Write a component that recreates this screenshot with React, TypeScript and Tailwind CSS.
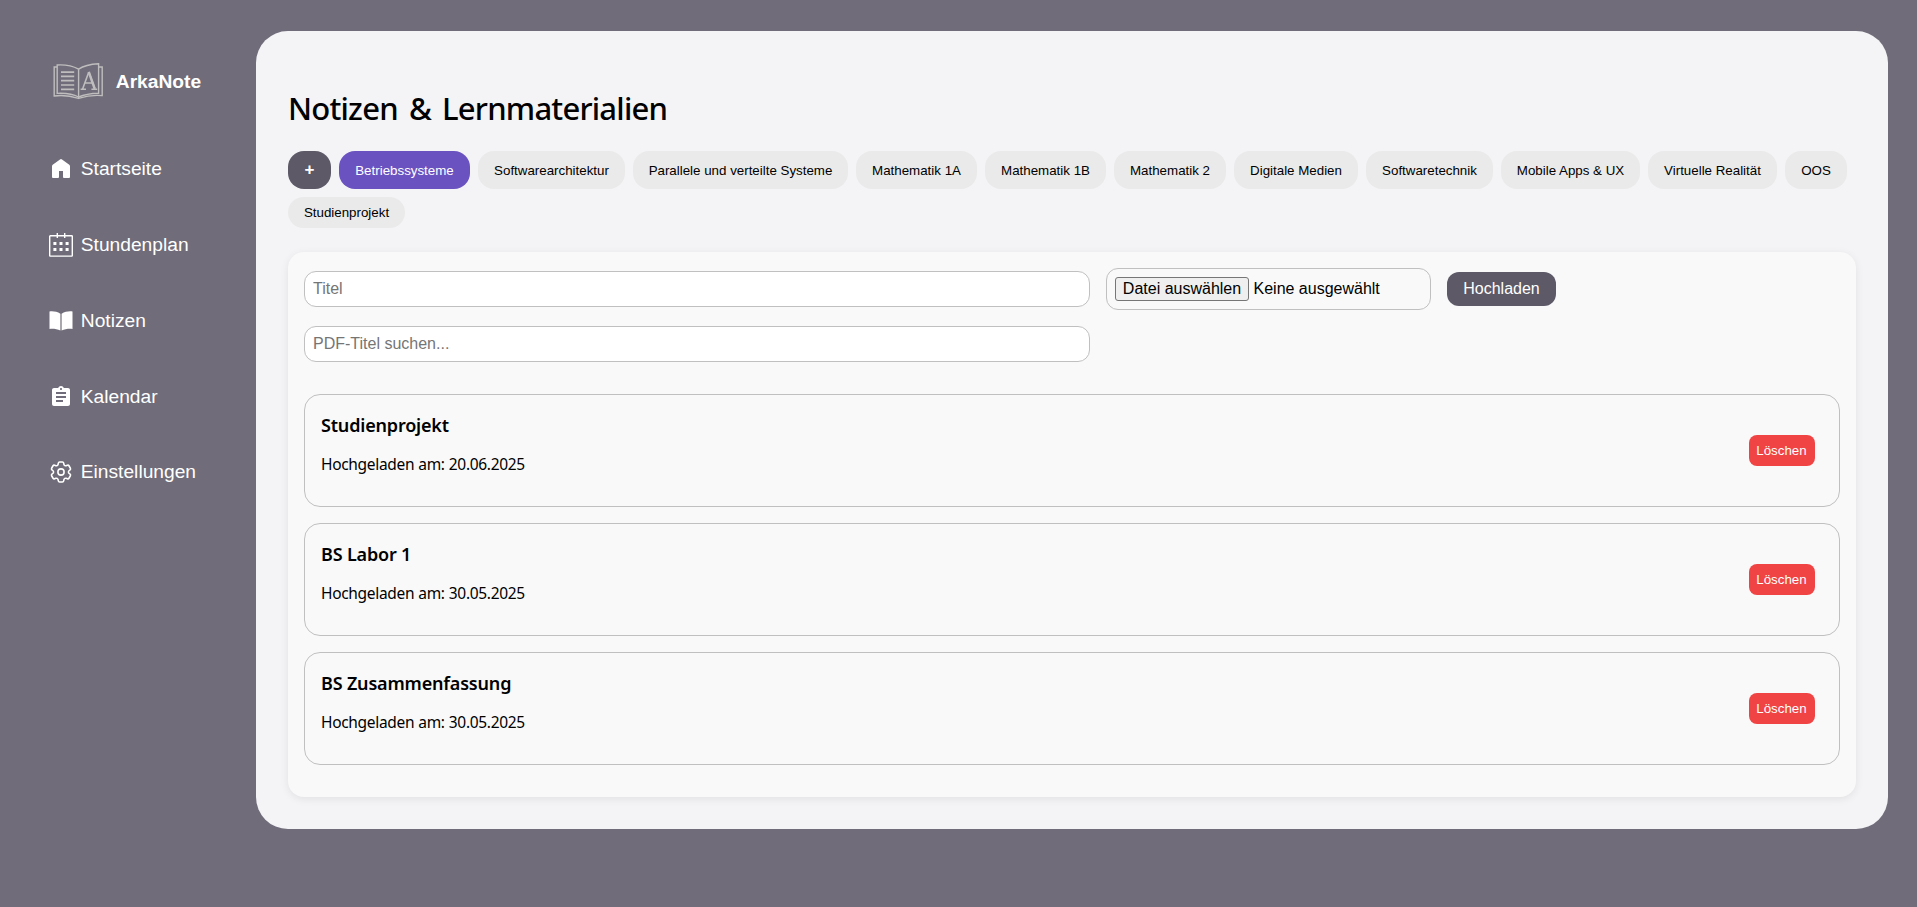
import React from "react";

const tabs: [string, string][] = [
  ["Betriebssysteme", "w-[131px]"],
  ["Softwarearchitektur", "w-[147px]"],
  ["Parallele und verteilte Systeme", "w-[215px]"],
  ["Mathematik 1A", "w-[121px]"],
  ["Mathematik 1B", "w-[121px]"],
  ["Mathematik 2", "w-[112px]"],
  ["Digitale Medien", "w-[124px]"],
  ["Softwaretechnik", "w-[127px]"],
  ["Mobile Apps & UX", "w-[139px]"],
  ["Virtuelle Realität", "w-[129px]"],
  ["OOS", "w-[62px]"],
  ["Studienprojekt", "w-[117px]"],
];

const documents = [
  { title: "Studienprojekt", date: "20.06.2025" },
  { title: "BS Labor 1", date: "30.05.2025" },
  { title: "BS Zusammenfassung", date: "30.05.2025" },
];

function Logo() {
  return (
    <svg width="50" height="38" viewBox="0 0 50 38" fill="none" stroke="#bfbdbd" strokeWidth="1.4">
      <path d="M4.2 3 C11 2.6 19 3.6 25.6 7.2 C31 3.6 38 2.2 45.6 1.8 V31.2 C38 31.4 31 32.6 25.6 35 C20 32 12 31 4.2 31.4 Z" />
      <path d="M4 5 H1.2 V34 C9 32.8 18 34 25.6 36.4 C33 34 41 32.8 49.2 33.6 V5 H46" />
      <path d="M25.6 7.2 V36" />
      <path d="M8 10.2 H21.2 M8 14.4 H21.2 M8 18.7 H21.2 M8 23 H21.2 M8 27.3 H21.2" strokeWidth="1.7" />
      <path d="M29.6 27 L35.8 10 M35.8 10 L42 27 M31.8 21 H39.6 M27.6 27.2 H33 M38.4 27.2 H44.2" strokeWidth="1.6" />
      <path d="M35.8 10 L41.6 26.5" strokeWidth="2.4" />
    </svg>
  );
}

function HomeIcon() {
  return (
    <svg width="24" height="24" viewBox="0 0 24 24" fill="white">
      <path d="M3 20 V9.3 C3 8.7 3.2 8.2 3.7 7.8 L11 2.4 Q12 1.7 13 2.4 L20.3 7.8 C20.8 8.2 21 8.7 21 9.3 V20 Q21 21 20 21 H15 Q14 21 14 20 V14 H10 V20 Q10 21 9 21 H4 Q3 21 3 20 Z" />
    </svg>
  );
}

function ScheduleIcon() {
  return (
    <svg width="24" height="24" viewBox="0 0 24 24" fill="none" stroke="white" strokeWidth="1.4">
      <rect x="0.7" y="2.7" width="22.6" height="20.4" rx="0.6" />
      <path d="M8.3 0 V5 M15.7 0 V5" />
      <path
        d="M4.4 10.4 h3 M10.5 10.4 h3 M16.6 10.4 h3 M4.4 16.4 h3 M10.5 16.4 h3 M16.6 16.4 h3"
        strokeWidth="3"
      />
    </svg>
  );
}

function BookIcon() {
  return (
    <svg width="24" height="24" viewBox="0 0 24 24" fill="white">
      <path d="M0.5 2.5 C4 2.1 8 2.5 11.4 4.8 V21.5 C8 19.9 4 19.5 0.5 19.9 Z M23.5 2.5 C20 2.1 16 2.5 12.6 4.8 V21.5 C16 19.9 20 19.5 23.5 19.9 Z" />
    </svg>
  );
}

function ClipboardIcon() {
  return (
    <svg width="24" height="24" viewBox="0 0 24 24" fill="white">
      <path d="M19 3h-4.18C14.4 1.84 13.3 1 12 1c-1.3 0-2.4.84-2.82 2H5c-1.1 0-2 .9-2 2v14c0 1.1.9 2 2 2h14c1.1 0 2-.9 2-2V5c0-1.1-.9-2-2-2zm-7 0c.55 0 1 .45 1 1s-.45 1-1 1-1-.45-1-1 .45-1 1-1zm2 14H7v-2h7v2zm3-4H7v-2h10v2zm0-4H7V7h10v2z" />
    </svg>
  );
}

function GearIcon() {
  return (
    <svg width="24" height="24" viewBox="1.2 1.2 21.6 21.6" fill="none" stroke="white" strokeWidth="1.4" strokeLinejoin="round">
      <path d="M9.594 3.94c.09-.542.56-.94 1.11-.94h2.593c.55 0 1.02.398 1.11.94l.213 1.281c.063.374.313.686.645.87.074.04.147.083.22.127.325.196.72.257 1.075.124l1.217-.456a1.125 1.125 0 0 1 1.37.49l1.296 2.247a1.125 1.125 0 0 1-.26 1.431l-1.003.827c-.293.241-.438.613-.43.992a7.723 7.723 0 0 1 0 .255c-.008.378.137.75.43.991l1.004.827c.424.35.534.955.26 1.43l-1.298 2.247a1.125 1.125 0 0 1-1.369.491l-1.217-.456c-.355-.133-.75-.072-1.076.124a6.47 6.47 0 0 1-.22.128c-.331.183-.581.495-.644.869l-.213 1.281c-.09.543-.56.94-1.11.94h-2.594c-.55 0-1.019-.398-1.11-.94l-.213-1.281c-.062-.374-.312-.686-.644-.87a6.52 6.52 0 0 1-.22-.127c-.325-.196-.72-.257-1.076-.124l-1.217.456a1.125 1.125 0 0 1-1.369-.49l-1.297-2.247a1.125 1.125 0 0 1 .26-1.431l1.004-.827c.292-.24.437-.613.43-.991a6.932 6.932 0 0 1 0-.255c.007-.38-.138-.751-.43-.992l-1.004-.827a1.125 1.125 0 0 1-.26-1.43l1.297-2.247a1.125 1.125 0 0 1 1.37-.491l1.216.456c.356.133.751.072 1.076-.124.072-.044.146-.086.22-.128.332-.183.582-.495.644-.869l.214-1.28Z" />
      <circle cx="12" cy="12" r="2.8" />
    </svg>
  );
}

const nav = [
  { label: "Startseite", icon: <HomeIcon /> },
  { label: "Stundenplan", icon: <ScheduleIcon /> },
  { label: "Notizen", icon: <BookIcon /> },
  { label: "Kalendar", icon: <ClipboardIcon /> },
  { label: "Einstellungen", icon: <GearIcon /> },
];

export default function App() {
  return (
    <div className="flex h-[907px] w-full items-start overflow-hidden bg-[#706c79] font-['Liberation_Sans',sans-serif] text-black">
      <aside className="w-[256px] shrink-0 text-[19.2px] text-white">
        <div className="mt-[62px] flex h-[38px] items-center pl-[53px]">
          <Logo />
          <span className="ml-[12.8px] pt-[2px] font-bold">ArkaNote</span>
        </div>
        <nav className="mt-[31px] flex flex-col">
          {nav.map((item) => (
            <a key={item.label} className="flex h-[75.75px] items-center gap-[7.8px] pl-[49px] pt-px">
              {item.icon}
              <span className="pt-px">{item.label}</span>
            </a>
          ))}
        </nav>
      </aside>

      <main className="mt-[31px] h-[798px] w-[1632px] rounded-[32px] bg-[#f4f4f7] px-8 pt-[54px]">
        <h1 className="h-[44px] whitespace-nowrap pt-px font-['Noto_Sans',sans-serif] text-[31px] font-medium leading-[44px] tracking-[-0.78px] [word-spacing:3.8px]">
          Notizen &amp; Lernmaterialien
        </h1>
        <div className="mt-[22px] flex flex-wrap gap-2 text-[13.333px]">
          <button className="h-[38px] w-[43px] rounded-2xl bg-[#5d5967] text-[17px] font-bold text-white">+</button>
          {tabs.map(([label, width], i) => (
            <button
              key={label}
              className={`${width} whitespace-nowrap rounded-2xl ${
                i === 0 ? "bg-[#6b52c1] text-white" : "bg-[#eaeaea]"
              } ${i === tabs.length - 1 ? "h-[31px]" : "h-[38px] pt-[2px]"}`}
            >
              {label}
            </button>
          ))}
        </div>

        <section className="mt-6 h-[545px] rounded-2xl bg-[#f9f9f9] p-4 shadow-[0_2px_8px_rgba(0,0,0,0.08)]">
          <div className="flex h-[42px] items-center gap-4">
            <input
              placeholder="Titel"
              className="h-[36px] w-[786px] rounded-xl border border-[#c0c0c0] bg-white px-2 text-base placeholder:text-[#757575]"
            />
            <div className="flex h-[42px] w-[325px] items-center gap-[4.5px] rounded-xl border border-[#c0c0c0] px-2">
              <button className="h-6 w-[134px] whitespace-nowrap rounded-[3px] border border-[#767676] bg-[#efefef] text-base leading-none">
                Datei auswählen
              </button>
              <span>Keine ausgewählt</span>
            </div>
            <button className="h-[34px] w-[109px] rounded-xl bg-[#5d5967] text-base text-white">Hochladen</button>
          </div>
          <input
            placeholder="PDF-Titel suchen..."
            className="mt-4 block h-[36px] w-[786px] rounded-xl border border-[#c0c0c0] bg-white px-2 text-base placeholder:text-[#757575]"
          />
          <div className="mt-8 flex flex-col gap-4">
            {documents.map((doc) => (
              <article
                key={doc.title}
                className="flex h-[113px] items-center justify-between rounded-2xl border border-[#c0c0c0] pl-4 pr-6"
              >
                <div className="h-[81px] font-['Noto_Sans',sans-serif]">
                  <h3 className="h-[26px] pt-[2px] text-[18px] font-semibold leading-[27px] tracking-[-0.18px]">{doc.title}</h3>
                  <p className="mt-[17px] text-[15.5px] leading-[22px] tracking-[-0.32px] [word-spacing:0.4px]">Hochgeladen am: {doc.date}</p>
                </div>
                <button className="h-[31px] w-[66px] rounded-lg bg-[#f04444] pr-px text-[13.333px] text-white">Löschen</button>
              </article>
            ))}
          </div>
        </section>
      </main>
    </div>
  );
}
